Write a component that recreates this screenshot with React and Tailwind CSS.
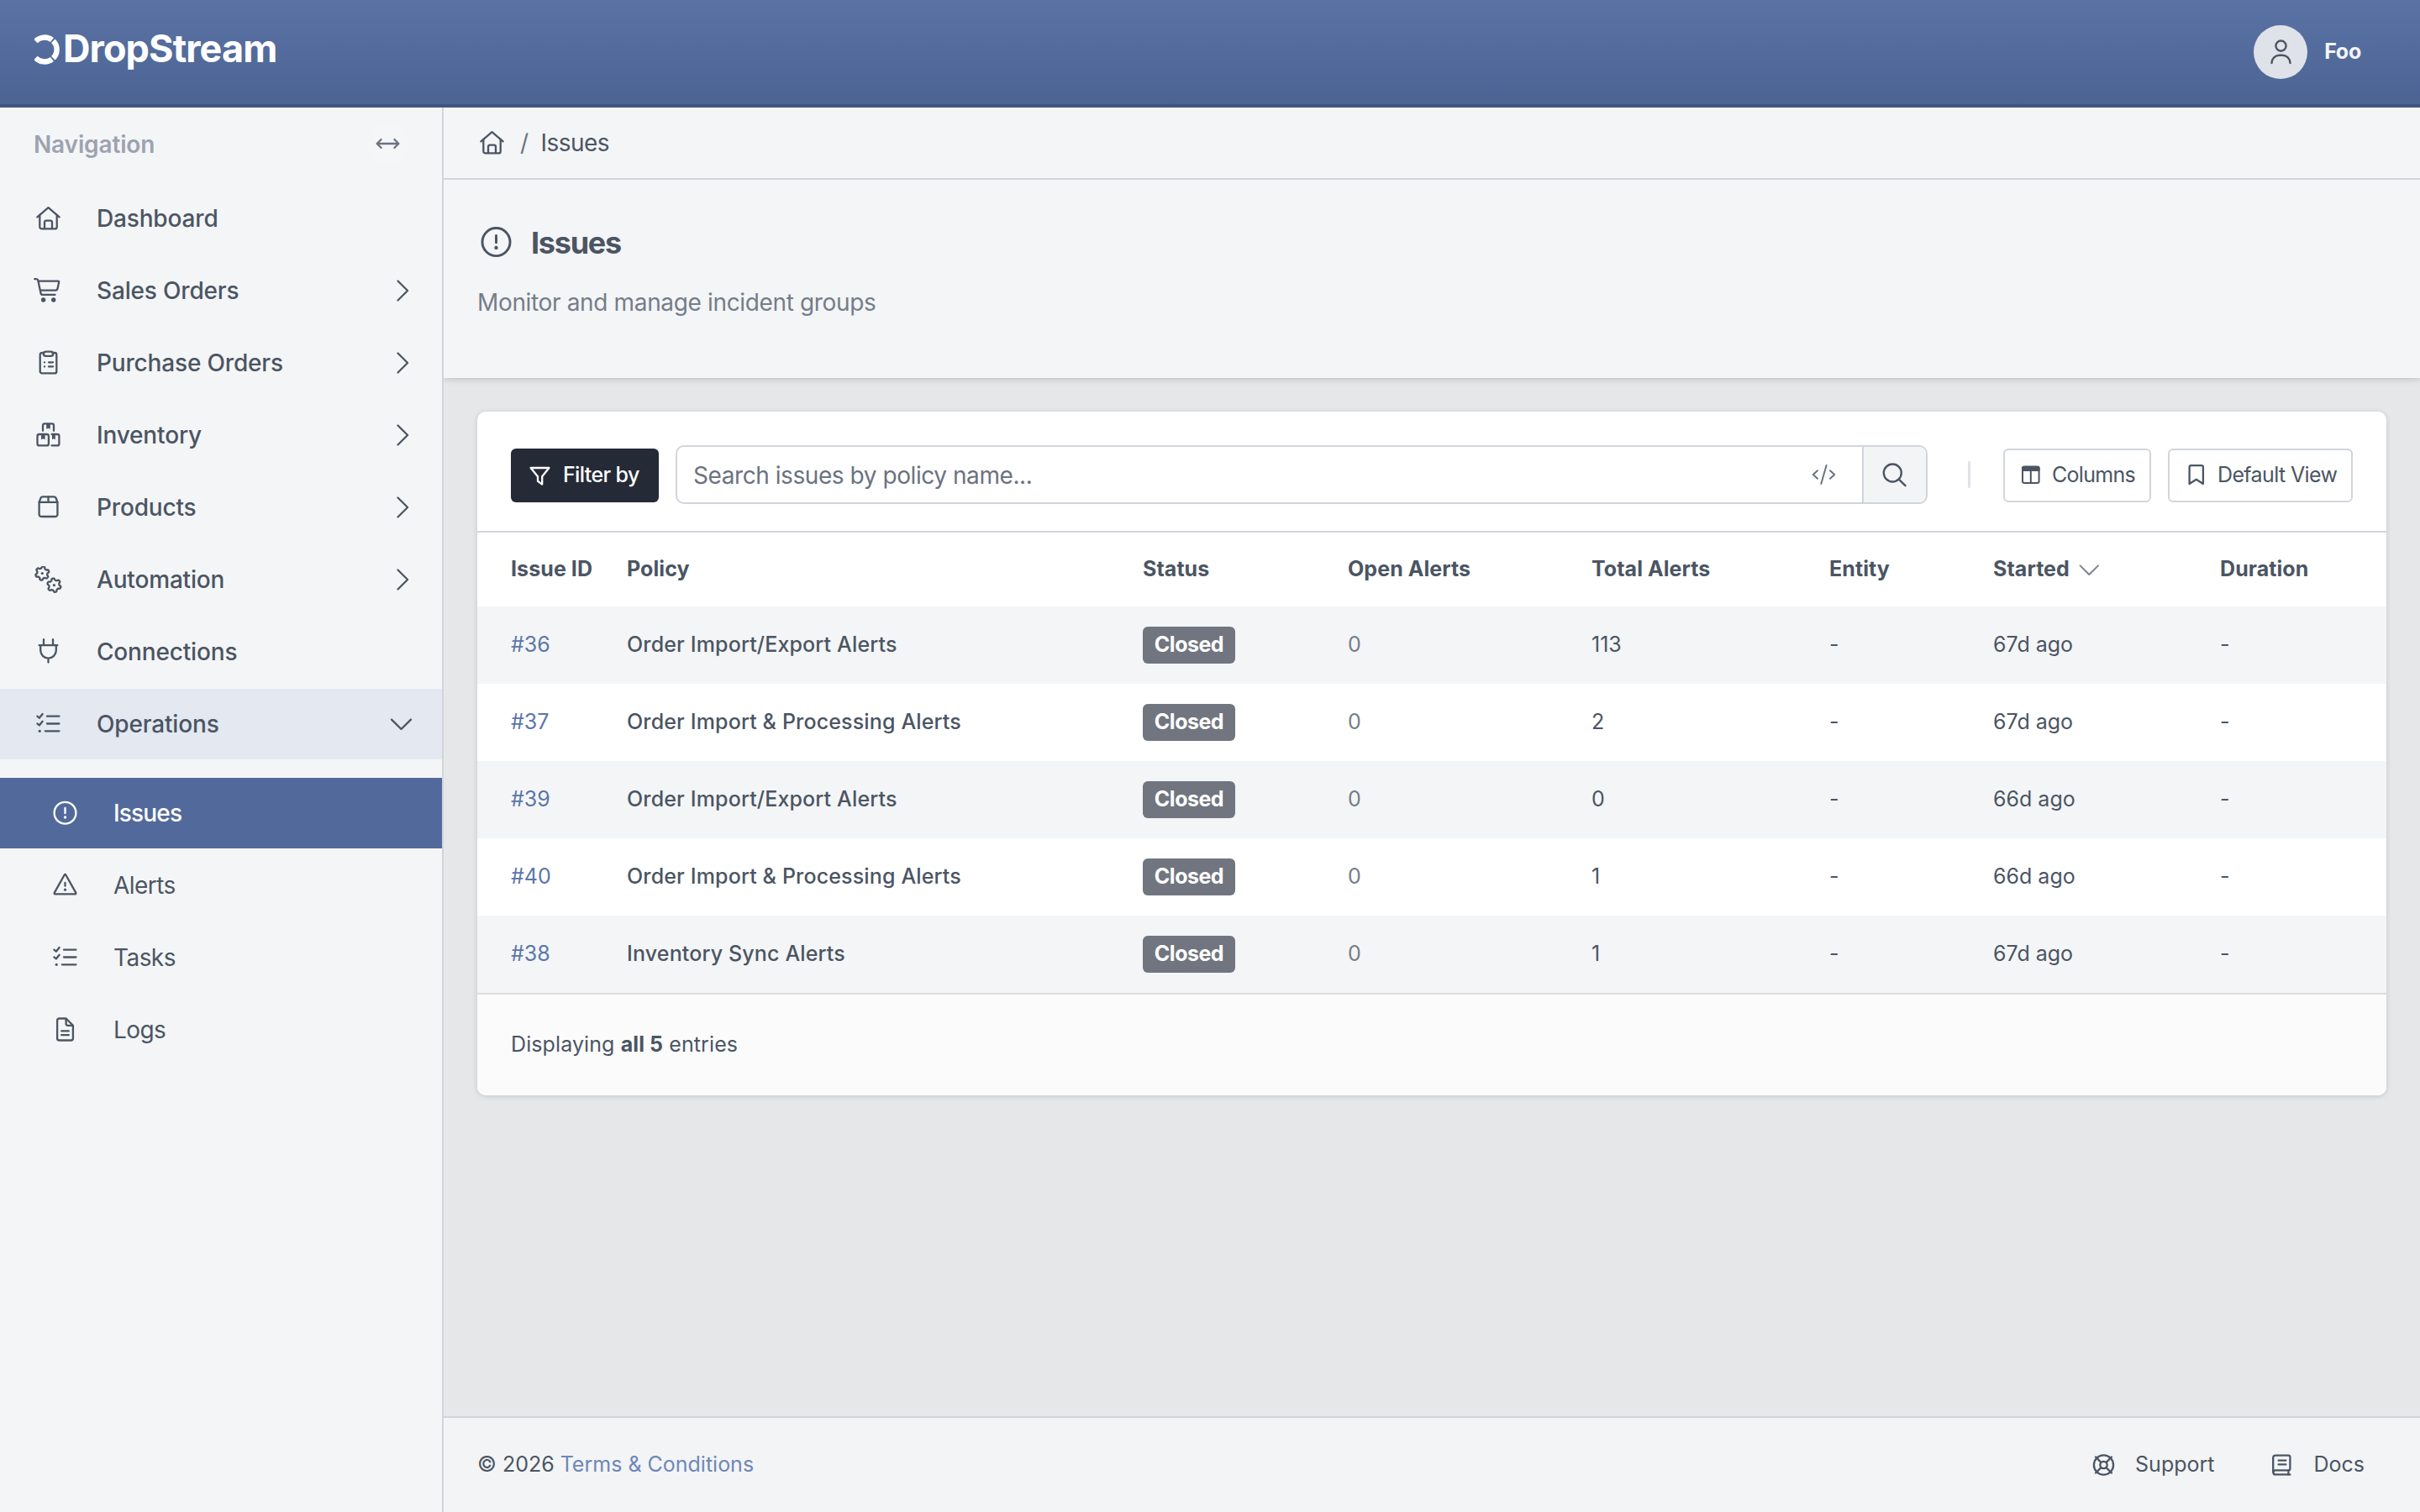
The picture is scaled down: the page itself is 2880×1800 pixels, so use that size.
// six-lobed cog outline around a centre point
function gearPath(cx, cy, phase) {
  const points = [];
  for (let i = 0; i < 72; i++) {
    const a = (i / 72) * Math.PI * 2;
    const r = 7.1 + 1.1 * Math.tanh(2.2 * Math.cos(6 * (a - phase)));
    points.push(`${(cx + r * Math.cos(a)).toFixed(2)} ${(cy + r * Math.sin(a)).toFixed(2)}`);
  }
  return `M${points.join('L')}Z`;
}

const icons = {
  home: (
    <>
      <path d="M4.4 14.4 17.5 3.2 30.6 14.4" />
      <path d="M7.3 12v14.2a2.2 2.2 0 0 0 2.2 2.2h16a2.2 2.2 0 0 0 2.2-2.2V12" />
      <path d="M13 28.2v-7.4a2.2 2.2 0 0 1 2.2-2.2h4.6a2.2 2.2 0 0 1 2.2 2.2v7.4" />
    </>
  ),
  cart: (
    <>
      <path d="M1.2 2.2h2.1a2 2 0 0 1 2 1.6l3.2 15.1a2.5 2.5 0 0 0 2.4 2h14.6" />
      <path d="M5.6 4.6h23.6a1 1 0 0 1 1 1.2l-1.7 7.8a2.5 2.5 0 0 1-2.4 2H8" />
      <circle cx="11.6" cy="27" r="2.7" fill="currentColor" stroke="none" />
      <circle cx="23.7" cy="27" r="2.7" fill="currentColor" stroke="none" />
    </>
  ),
  clipboard: (
    <>
      <path d="M12.6 4H9.9a2.2 2.2 0 0 0-2.2 2.2v20a2.2 2.2 0 0 0 2.2 2.2h15.2a2.2 2.2 0 0 0 2.2-2.2v-20A2.2 2.2 0 0 0 25.1 4h-2.7" />
      <path d="M14.4 2.6h6.2a2.6 2.6 0 0 1 0 5.2h-6.2a2.6 2.6 0 0 1 0-5.2z" />
      <path d="M18 15.3h5M18 20.4h5M12.9 15.3h.1M12.9 20.4h.1" />
    </>
  ),
  boxes: (
    <>
      <path d="M11 10.8V4.6a2.2 2.2 0 0 1 2.2-2.2h8.6A2.2 2.2 0 0 1 24 4.6v6.2" />
      <rect x="4.5" y="15" width="13.4" height="13.4" rx="2.2" />
      <path d="M21.6 15h6.6a2.2 2.2 0 0 1 2.2 2.2v9a2.2 2.2 0 0 1-2.2 2.2h-6.6" />
      <path d="M15.2 2.4h4.6v6.3l-2.3-1-2.3 1zM9 15h4.6v6.3l-2.3-1-2.3 1zM22 15h3.8v6.3l-1.9-1-1.9 1z" fill="currentColor" stroke="none" />
    </>
  ),
  box: (
    <>
      <path d="M6.6 9.8v14.6A2.5 2.5 0 0 0 9.1 27h16.8a2.5 2.5 0 0 0 2.5-2.6V9.8L26.6 5a2.6 2.6 0 0 0-2.4-1.6H10.8A2.6 2.6 0 0 0 8.4 5z" />
      <path d="M6.6 9.8h21.8M17.5 3.4v6.4" />
    </>
  ),
  gears: (
    <>
      <path d={gearPath(10.3, 8.5, -1.4)} />
      <path d={gearPath(24.4, 22.7, -1.75)} />
      <circle cx="10.3" cy="8.5" r="1.6" fill="currentColor" stroke="none" />
      <circle cx="24.4" cy="22.7" r="1.6" fill="currentColor" stroke="none" />
    </>
  ),
  plug: <path d="M12 1.2V8M23 1.2V8M6.6 8.1h21.8M8.2 8.1v6.2a9.3 9.3 0 0 0 18.6 0V8.1M17.5 23.6v5" />,
  tasks: (
    <>
      <path d="M16 6.7h14.4M16 15.5h14.4M13.8 24.3h16.6" />
      <path d="M4.4 6.6 6.8 8.7 10.6 4M4.4 15.4l2.4 2.1 3.8-4.7" />
      <circle cx="7.2" cy="24.3" r="1.6" fill="currentColor" stroke="none" />
    </>
  ),
  issue: (
    <>
      <circle cx="17.5" cy="15.7" r="12.9" />
      <path d="M17.5 9.8v6.4" />
      <circle cx="17.5" cy="21" r="1.7" fill="currentColor" stroke="none" />
    </>
  ),
  alert: (
    <>
      <path d="M16.7 3.5 4.7 24.9a.9.9 0 0 0 .8 1.4h24a.9.9 0 0 0 .8-1.4L18.3 3.5a.9.9 0 0 0-1.6 0z" />
      <path d="M17.5 12.9v3.8" />
      <circle cx="17.5" cy="21.2" r="1.6" fill="currentColor" stroke="none" />
    </>
  ),
  file: (
    <>
      <path d="M18.6 2.5h-8.2a2.3 2.3 0 0 0-2.3 2.3v21.4a2.3 2.3 0 0 0 2.3 2.3h14.2a2.3 2.3 0 0 0 2.3-2.3V10.8z" />
      <path d="M18.6 2.8v5.8a2.2 2.2 0 0 0 2.2 2.2h5.8M13.2 17.4h8.6M13.2 22.2h8.6" />
    </>
  ),
  lifeRing: (
    <>
      <circle cx="17.5" cy="16" r="11.6" />
      <circle cx="17.5" cy="16" r="4.2" />
      <path d="m8 6.5 6.4 6.4M27 6.5l-6.4 6.4M8 25.5l6.4-6.4M27 25.5l-6.4-6.4" />
    </>
  ),
  book: (
    <>
      <path d="M27.4 27.4H10a2.8 2.8 0 0 1-2.8-2.8V7.4A2.8 2.8 0 0 1 10 4.6h15.6a1.8 1.8 0 0 1 1.8 1.8v14.2a1.8 1.8 0 0 1-1.8 1.8H10a2.5 2.5 0 0 0 0 5" />
      <path d="M25.4 22.4v5M13.6 10.6h8.8M13.6 15.4h8.8" />
    </>
  ),
  arrows: <path d="M4.8 16h25.4M9.6 11l-5 5 5 5M25.4 11l5 5-5 5" />,
  user: (
    <>
      <circle cx="17.5" cy="8.6" r="6.1" />
      <path d="M6.5 29a9.4 9.4 0 0 1 9.4-9.2h3.2A9.4 9.4 0 0 1 28.5 29" />
    </>
  ),
  code: <path d="m10 11.2-5.2 4.8 5.2 4.8M25 11.2l5.2 4.8-5.2 4.8M20.6 5l-6.3 22" />,
  search: (
    <>
      <circle cx="14.3" cy="14" r="10.5" />
      <path d="m21.8 21.6 7.7 7.6" />
    </>
  ),
  columns: (
    <>
      <rect x="7" y="5.6" width="19.6" height="19.4" rx="2.2" />
      <path d="M16.8 10v15" />
      <path d="M7 6.4h19.6V10H7z" fill="currentColor" />
    </>
  ),
  bookmark: <path d="M9.6 26V6.1a2 2 0 0 1 2-2h12.3a2 2 0 0 1 2 2V26l-8.15-5.2z" />,
  filter: <path d="M6.6 7h21.8l-8.2 10.2v9.4l-5.2-3.8v-5.6z" />,
  right: <path d="m12.5 4.5 11.6 11.5-11.6 11.5" />,
  down: <path d="M5 10.6 16.5 22 28 10.6" />,
  sort: <path d="M6.6 11.4 17.3 22 28 11.4" />,
};

function Icon({ name, className = 'w-[35px] h-8', stroke = 2.3 }) {
  return (
    <svg
      viewBox="0 0 35 32"
      className={`shrink-0 ${className}`}
      fill="none"
      stroke="currentColor"
      strokeWidth={stroke}
      strokeLinecap="round"
      strokeLinejoin="round"
    >
      {icons[name]}
    </svg>
  );
}

const navItems = [
  { label: 'Dashboard', icon: 'home' },
  { label: 'Sales Orders', icon: 'cart', more: true },
  { label: 'Purchase Orders', icon: 'clipboard', more: true },
  { label: 'Inventory', icon: 'boxes', more: true },
  { label: 'Products', icon: 'box', more: true },
  { label: 'Automation', icon: 'gears', more: true },
  { label: 'Connections', icon: 'plug' },
  { label: 'Operations', icon: 'tasks', open: true },
];

const subItems = [
  { label: 'Issues', icon: 'issue', active: true },
  { label: 'Alerts', icon: 'alert' },
  { label: 'Tasks', icon: 'tasks' },
  { label: 'Logs', icon: 'file' },
];

const issues = [
  { id: 36, policy: 'Order Import/Export Alerts', total: 113, started: '67d ago' },
  { id: 37, policy: 'Order Import & Processing Alerts', total: 2, started: '67d ago' },
  { id: 39, policy: 'Order Import/Export Alerts', total: 0, started: '66d ago' },
  { id: 40, policy: 'Order Import & Processing Alerts', total: 1, started: '66d ago' },
  { id: 38, policy: 'Inventory Sync Alerts', total: 1, started: '67d ago' },
];

export default function App() {
  return (
    <div className="flex h-[1800px] w-full flex-col overflow-hidden bg-[#e5e7e9] font-['Inter',sans-serif] text-[#4b5563]">
      <Header />
      <div className="flex min-h-0 flex-1">
        <Sidebar />
        <div className="flex min-w-0 flex-1 flex-col">
          <nav className="relative z-20 flex h-[86px] shrink-0 items-center border-b-2 border-[#d1d5db] bg-[#f4f5f7] pl-10 text-[28px] tracking-[-0.02em]">
            <Icon name="home" />
            <span className="ml-4 text-[#6b7280]">/</span>
            <span className="ml-[15px]">Issues</span>
          </nav>
          <section className="relative z-10 h-[236px] shrink-0 bg-[#f4f5f7] pl-10 pt-[50px] shadow-[0_1px_8px_rgba(0,0,0,0.2)]">
            <div className="flex h-12 items-center">
              <Icon name="issue" className="h-[41px] w-[45px]" />
              <h1 className="ml-[19px] pt-0.5 text-[36px] font-bold tracking-[-0.035em]">Issues</h1>
            </div>
            <p className="mt-7 text-[28px] leading-10 tracking-[-0.0125em] text-[#757d89]">Monitor and manage incident groups</p>
          </section>
          <main className="flex-1 p-10">
            <IssuesCard />
          </main>
          <Footer />
        </div>
      </div>
    </div>
  );
}

function Header() {
  return (
    <header className="flex h-32 shrink-0 items-center border-b-4 border-[#3f557f] bg-linear-to-b from-[#5b73a4] to-[#4c6494] pl-[41px] pr-[70px] text-white">
      <svg viewBox="0 0 30 36" className="mb-[7px] h-9 w-[30px]" fill="none" stroke="currentColor" strokeWidth="6.4">
        <path d="M1.4 8.1A14.5 14.5 0 0 1 20.9 6.6" />
        <path d="M22.3 7.7A14.5 14.5 0 0 1 22.3 28.3" />
        <path d="M20.9 29.4A14.5 14.5 0 0 1 1.4 27.9" />
      </svg>
      <span className="mb-[9px] ml-1 text-[45px] font-bold tracking-[-0.02em]">DropStream</span>
      <span className="ml-auto flex size-16 items-center justify-center rounded-full bg-[#dfe2e8] text-[#4b5563]">
        <Icon name="user" stroke="2.4" />
      </span>
      <span className="ml-5 text-[25px] font-bold tracking-[-0.01em] text-[#f4f5f7]">Foo</span>
    </header>
  );
}

function Sidebar() {
  return (
    <aside className="relative z-20 flex w-[528px] shrink-0 flex-col border-r-2 border-[#d1d5db] bg-[#f4f5f7] text-[28px]">
      <div className="mb-0.5 flex h-[88px] items-center justify-between px-10 font-semibold tracking-[-0.005em] text-[#9ca3af]">
        Navigation
        <span className="mb-0.5 flex size-[50px] items-center justify-center rounded-full bg-[#f5f6f8] text-[#6b7280]">
          <Icon name="arrows" />
        </span>
      </div>
      <ul className="flex flex-col gap-0.5 font-medium tracking-[-0.006em]">
        {navItems.map((item) => (
          <li key={item.label} className={`flex h-[84px] items-center pl-10 pr-[30px] ${item.open ? 'bg-[#e3e8f1]' : ''}`}>
            <Icon name={item.icon} />
            <span className="ml-10">{item.label}</span>
            {item.more && <Icon name="right" className="ml-auto h-8 w-[35px]" />}
            {item.open && <Icon name="down" className="ml-auto h-8 w-[35px]" />}
          </li>
        ))}
      </ul>
      <ul className="mt-[22px] flex flex-col gap-0.5 tracking-[-0.02em]">
        {subItems.map((item) => (
          <li key={item.label} className={`flex h-[84px] items-center pl-[60px] ${item.active ? 'bg-[#526a9b] font-medium tracking-[-0.03em] text-white' : ''}`}>
            <Icon name={item.icon} />
            <span className="ml-10">{item.label}</span>
          </li>
        ))}
      </ul>
    </aside>
  );
}

function IssuesCard() {
  return (
    <section className="overflow-hidden rounded-[10px] bg-white shadow-[0_1px_6px_rgba(0,0,0,0.15)]">
      <div className="flex h-36 items-center border-b-2 border-[#d1d5db] px-10 pt-2 text-[25px]">
        <button type="button" className="mt-0.5 flex h-16 w-44 items-center rounded-md bg-[#242a36] pl-[17px] font-medium tracking-[-0.025em] text-white">
          <Icon name="filter" />
          <span className="ml-2.5">Filter by</span>
        </button>
        <div className="ml-5 flex h-[70px] w-[1490px] items-stretch overflow-hidden rounded-[10px] border-2 border-[#d1d5db]">
          <div className="flex flex-1 items-center pl-[19px] pr-7 text-[28px] tracking-[-0.0155em] text-[#6b7280]">
            <span className="pt-0.5">Search issues by policy name...</span>
            <Icon name="code" className="ml-auto h-8 w-[35px]" stroke="2" />
          </div>
          <button type="button" className="flex w-[76px] items-center justify-center border-l-2 border-[#d1d5db] bg-[#f3f4f6]">
            <Icon name="search" stroke="2.4" />
          </button>
        </div>
        <span className="ml-12 mr-[39px] h-8 w-[3px] rounded-full bg-[#dfe2e8]" />
        <button type="button" className="mt-0.5 flex h-16 w-44 items-center rounded-md border-2 border-[#d1d5db] pl-3.5 tracking-[-0.028em]">
          <Icon name="columns" stroke="2" />
          <span className="ml-[7px]">Columns</span>
        </button>
        <button type="button" className="ml-5 mt-0.5 flex h-16 w-[220px] items-center rounded-md border-2 border-[#d1d5db] pl-3.5 tracking-[-0.025em]">
          <Icon name="bookmark" />
          <span className="ml-2">Default View</span>
        </button>
      </div>
      <table className="w-full table-fixed text-left text-[25px]">
        <colgroup>
          <col className="w-[178px]" />
          <col className="w-[614px]" />
          <col className="w-[244px]" />
          <col className="w-[290px]" />
          <col className="w-[283px]" />
          <col className="w-[195px]" />
          <col className="w-[270px]" />
          <col />
        </colgroup>
        <thead>
          <tr className="h-[88px] font-semibold tracking-[0.003em]">
            <th className="pl-10">Issue ID</th>
            <th>Policy</th>
            <th>Status</th>
            <th>Open Alerts</th>
            <th>Total Alerts</th>
            <th>Entity</th>
            <th>
              <span className="flex items-center">
                Started
                <Icon name="sort" className="ml-1.5 h-8 w-[35px] text-[#7b8490]" stroke="2" />
              </span>
            </th>
            <th>Duration</th>
          </tr>
        </thead>
        <tbody>
          {issues.map((issue) => (
            <tr key={issue.id} className="h-[92px] odd:bg-[#f4f5f7]">
              <td className="pl-10 text-[#5b75aa]">#{issue.id}</td>
              <td className="font-medium tracking-[0.006em]">{issue.policy}</td>
              <td>
                <span className="inline-flex h-11 w-[110px] items-center justify-center rounded-md bg-[#71757f] align-middle font-bold tracking-[-0.02em] text-white">
                  Closed
                </span>
              </td>
              <td className="text-[#757d89]">0</td>
              <td>{issue.total}</td>
              <td>-</td>
              <td>{issue.started}</td>
              <td>-</td>
            </tr>
          ))}
        </tbody>
      </table>
      <div className="flex h-[122px] items-center border-t-2 border-[#dcdddf] bg-[#fbfbfc] pl-10 text-[25px] tracking-[0.004em]">
        <p>
          Displaying <b>all 5</b> entries
        </p>
      </div>
    </section>
  );
}

function Footer() {
  return (
    <footer className="flex h-[114px] shrink-0 items-center border-t-2 border-[#d1d5db] bg-[#f3f4f6] pl-10 pr-[66px] text-[25px]">
      <p>
        © 2026 <a className="text-[#6f87b7]">Terms &amp; Conditions</a>
      </p>
      <Icon name="lifeRing" className="ml-auto h-8 w-[35px]" />
      <span className="ml-5">Support</span>
      <Icon name="book" className="ml-[63px] h-8 w-[35px]" />
      <span className="ml-5">Docs</span>
    </footer>
  );
}
